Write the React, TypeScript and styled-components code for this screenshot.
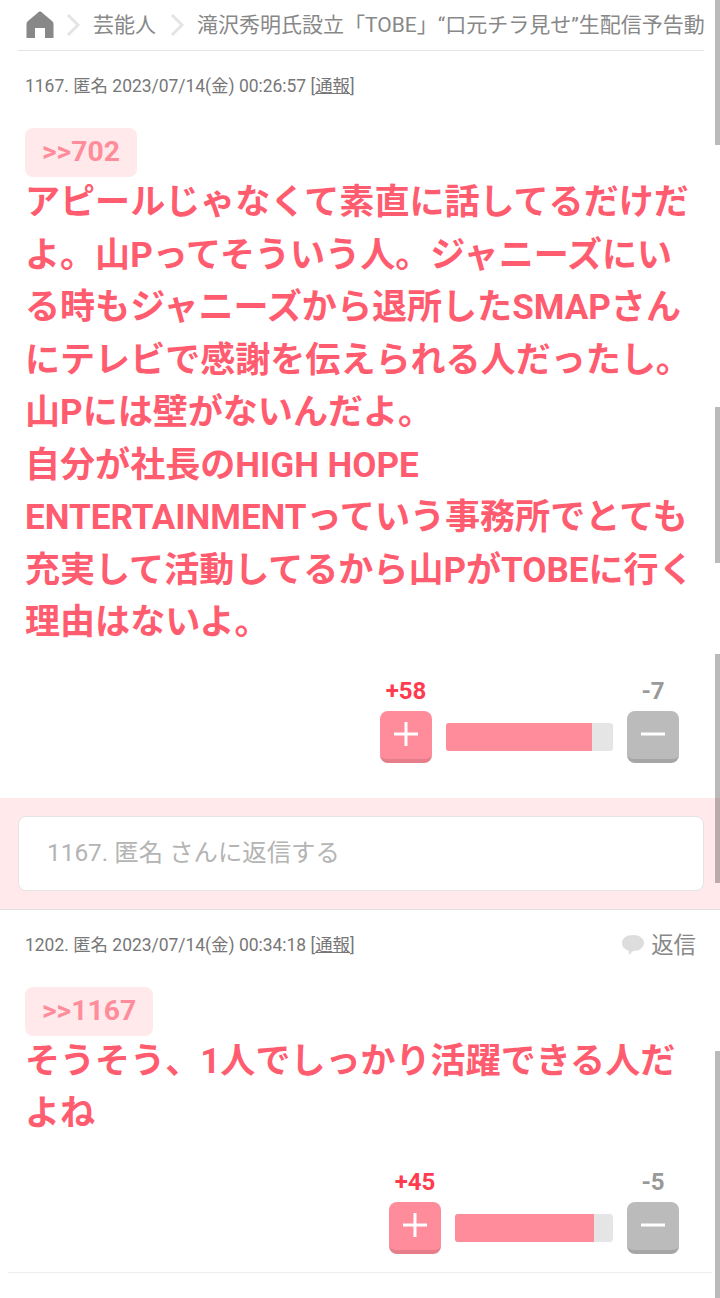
import styled, {createGlobalStyle} from 'styled-components';

const GlobalStyle = createGlobalStyle`
  html, body {
    margin: 0;
    padding: 0;
    background: #fff;
  }
  body {
    height: 1298px;
    overflow: hidden;
    font-family: Roboto, "Noto Sans CJK JP", sans-serif;
  }
`;

const comments = [
  {
    no: 1167,
    date: '2023/07/14(金) 00:26:57',
    anchor: '>>702',
    lines: 'アピールじゃなくて素直に話してるだけだよ。山Pってそういう人。ジャニーズにいる時もジャニーズから退所したSMAPさんにテレビで感謝を伝えられる人だったし。\n山Pには壁がないんだよ。\n自分が社長のHIGH HOPE ENTERTAINMENTっていう事務所でとても充実して活動してるから山PがTOBEに行く理由はないよ。',
    plus: 58,
    minus: 7,
    barWidth: 167,
    rate: 87.4,
  },
  {
    no: 1202,
    date: '2023/07/14(金) 00:34:18',
    anchor: '>>1167',
    lines: 'そうそう、1人でしっかり活躍できる人だよね',
    plus: 45,
    minus: 5,
    barWidth: 158,
    rate: 88,
  },
];

const Breadcrumb = () => (
  <Crumbs>
    <HomeIcon width="28" height="27" viewBox="0 0 28 27">
      <path
        d="M14 0.500 C15 0.500 15.500 1 16.500 2 L26 10 C27 11 27.500 12 27.500 13.500 V27 H19 V17 H9 V27 H0.500 V13.500 C0.500 12 1 11 2 10 L11.500 2 C12.500 1 13 0.500 14 0.500 Z"
        fill="#888"
      />
    </HomeIcon>
    <Chevron />
    <CrumbText>芸能人</CrumbText>
    <Chevron />
    <CrumbText>滝沢秀明氏設立「TOBE」“口元チラ見せ”生配信予告動画</CrumbText>
  </Crumbs>
);

const Chevron = () => (
  <ChevronIcon width="14" height="24" viewBox="0 0 14 24">
    <path d="M2 2 L12 12 L2 22" fill="none" stroke="#e4e4e4" strokeWidth="3" />
  </ChevronIcon>
);

const Vote = ({plus, minus, barWidth, rate}: {plus: number; minus: number; barWidth: number; rate: number}) => (
  <VoteRow>
    <VoteColumn>
      <VoteCount $plus>+{plus}</VoteCount>
      <VoteButton $plus>
        <svg width="24" height="24" viewBox="0 0 24 24">
          <path d="M0 12 H24 M12 0 V24" stroke="#fff" strokeWidth="3" />
        </svg>
      </VoteButton>
    </VoteColumn>
    <Bar style={{width: barWidth}}>
      <BarFill style={{width: `${rate}%`}} />
    </Bar>
    <VoteColumn>
      <VoteCount>-{minus}</VoteCount>
      <VoteButton>
        <svg width="24" height="24" viewBox="0 0 24 24">
          <path d="M0 12 H24" stroke="#fff" strokeWidth="3" />
        </svg>
      </VoteButton>
    </VoteColumn>
  </VoteRow>
);

export default function App() {
  const [first, second] = comments;
  return (
    <>
      <GlobalStyle />
      <Page>
        <Breadcrumb />
        <FirstMeta>
          {first.no}. 匿名 {first.date} [<u>通報</u>]
        </FirstMeta>
        <Body>
          <Anchor>{first.anchor}</Anchor>
          <Text>{first.lines}</Text>
        </Body>
        <Vote plus={first.plus} minus={first.minus} barWidth={first.barWidth} rate={first.rate} />
        <ReplyBand>
          <ReplyBox>{first.no}. 匿名 さんに返信する</ReplyBox>
        </ReplyBand>
        <MetaRow>
          <Meta>
            {second.no}. 匿名 {second.date} [<u>通報</u>]
          </Meta>
          <ReplyLink>
            <svg width="24" height="22" viewBox="0 0 24 22">
              <path
                d="M12 1 C18.500 1 23 4.500 23 9 C23 13.500 18.500 17 12 17 L8 21 L7.500 16.500 C3.500 15.500 1 12.500 1 9 C1 4.500 5.500 1 12 1 Z"
                fill="#ddd"
              />
            </svg>
            返信
          </ReplyLink>
        </MetaRow>
        <Body $tight>
          <Anchor>{second.anchor}</Anchor>
          <Text>{second.lines}</Text>
        </Body>
        <Vote plus={second.plus} minus={second.minus} barWidth={second.barWidth} rate={second.rate} />
        <Divider />
        <ScrollMarks>
          <ScrollMark $top={0} $height={145} />
          <ScrollMark $top={407} $height={156} />
          <ScrollMark $top={654} $height={229} />
          <ScrollMark $top={1051} $height={247} />
        </ScrollMarks>
      </Page>
    </>
  );
}

const Page = styled.div`
  position: relative;
  width: 720px;
  height: 1298px;
  overflow: hidden;
`;

const Crumbs = styled.div`
  display: flex;
  align-items: center;
  height: 50px;
  margin: 0 16px 0 18px;
  padding: 0 0 0 8px;
  border-bottom: 1px solid #e4e4e4;
  white-space: nowrap;
  overflow: hidden;
`;

const HomeIcon = styled.svg`
  flex: none;
  margin-top: -2px;
`;

const ChevronIcon = styled.svg`
  flex: none;
  margin: 0 13px 0 12px;
`;

const CrumbText = styled.span`
  flex: none;
  padding-right: 2px;
  color: #888;
  font-size: 21px;
  line-height: 36px;
`;

const FirstMeta = styled.div`
  margin: 24px 0 0 25px;
  color: #777;
  font-size: 17.450px;
  line-height: 22px;
`;

const Meta = styled.div`
  color: #777;
  font-size: 17.450px;
  line-height: 22px;
`;

const Body = styled.div<{$tight?: boolean}>`
  margin: ${(p) => (p.$tight ? 26 : 31)}px 25px 0 25px;
`;

const Anchor = styled.div`
  display: table;
  padding: 0 17px 2px;
  border-radius: 8px;
  background: #ffe9eb;
  color: #ff8c9a;
  font-size: 28.300px;
  font-weight: 700;
  line-height: 47px;
`;

const Text = styled.div`
  margin-top: -1px;
  color: #ff5c70;
  font-size: 35.050px;
  font-weight: 700;
  line-height: 52.500px;
  white-space: pre-wrap;
`;

const VoteRow = styled.div`
  display: flex;
  justify-content: flex-end;
  align-items: flex-end;
  gap: 14px;
  margin: 27px 41px 0 0;
`;

const VoteColumn = styled.div`
  display: flex;
  flex-direction: column;
  align-items: center;
  width: 52px;
`;

const VoteCount = styled.div<{$plus?: boolean}>`
  color: ${(p) => (p.$plus ? '#ff3b50' : '#999')};
  font-size: 24px;
  font-weight: 700;
  line-height: 30px;
  margin-bottom: 5px;
`;

const VoteButton = styled.div<{$plus?: boolean}>`
  display: flex;
  align-items: center;
  justify-content: center;
  box-sizing: border-box;
  width: 52px;
  height: 52px;
  padding-bottom: 1px;
  border-radius: 8px;
  border-bottom: 4px solid ${(p) => (p.$plus ? '#e57e8a' : '#a6a6a6')};
  background: ${(p) => (p.$plus ? '#ff8c9a' : '#bbb')};
`;

const Bar = styled.div`
  height: 28px;
  margin-bottom: 12px;
  border-radius: 3px;
  background: #e5e5e5;
  overflow: hidden;
`;

const BarFill = styled.div`
  height: 100%;
  background: #ff8c9a;
`;

const ReplyBand = styled.div`
  margin-top: 35px;
  padding: 18px 16px 18px 18px;
  border-bottom: 1px solid #e0e0e0;
  background: #ffe9eb;
`;

const ReplyBox = styled.div`
  box-sizing: border-box;
  height: 75px;
  padding-left: 28px;
  border: 1px solid #e4e4e4;
  border-radius: 8px;
  background: #fff;
  color: #b4b4b4;
  font-size: 24.400px;
  line-height: 71px;
`;

const MetaRow = styled.div`
  display: flex;
  justify-content: space-between;
  align-items: center;
  margin: 19px 24px 0 25px;
`;

const ReplyLink = styled.div`
  display: flex;
  align-items: center;
  gap: 6px;
  color: #888;
  font-size: 22.400px;
  line-height: 32px;
`;

const Divider = styled.div`
  margin: 18px 8px 0;
  border-top: 1px solid #eee;
`;

const ScrollMarks = styled.div`
  position: absolute;
  top: 0;
  right: 0;
  bottom: 0;
  width: 5px;
`;

const ScrollMark = styled.div<{$top: number; $height: number}>`
  position: absolute;
  top: ${(p) => p.$top}px;
  left: 0;
  width: 5px;
  height: ${(p) => p.$height}px;
  background: rgba(0, 0, 0, 0.27);
`;
